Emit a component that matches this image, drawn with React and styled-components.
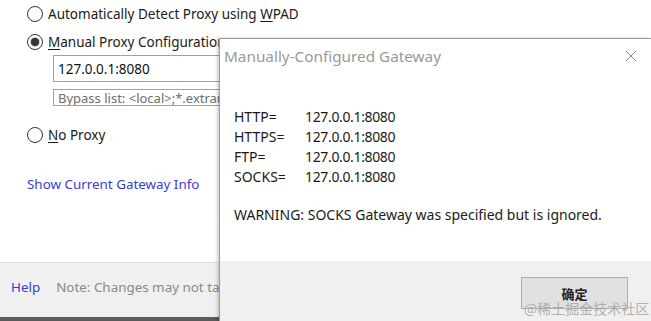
import React from 'react'
import styled, { createGlobalStyle } from 'styled-components'

const GlobalStyle = createGlobalStyle`
  html, body {
    margin: 0;
    padding: 0;
    width: 651px;
    height: 321px;
    overflow: hidden;
    background: #ffffff;
  }
  #root {
    width: 651px;
    height: 321px;
  }
`

const App = () => {
  return (
    <>
      <GlobalStyle />
      <Screen>
        <Settings>
          <Options>
            <RadioRow>
              <Radio />
              <Label>
                Automatically Detect Proxy using <u>W</u>PAD
              </Label>
            </RadioRow>
            <RadioRow>
              <Radio checked />
              <Label>
                <u>M</u>anual Proxy Configuration
              </Label>
            </RadioRow>
            <Fields>
              <TextInput>127.0.0.1:8080</TextInput>
              <TextInput placeholder>Bypass list: &lt;local&gt;;*.extranet.example.com</TextInput>
            </Fields>
            <RadioRow>
              <Radio />
              <Label>
                <u>N</u>o Proxy
              </Label>
            </RadioRow>
          </Options>
          <LinkText>Show Current Gateway Info</LinkText>
        </Settings>
        <StatusBar>
          <HelpLink>Help</HelpLink>
          <Note>Note: Changes may not take effect until you restart</Note>
        </StatusBar>

        <Dialog>
          <TitleBar>
            <Title>Manually-Configured Gateway</Title>
            <CloseIcon viewBox="0 0 12 12">
              <path d="M1 1 L11 11 M11 1 L1 11" stroke="#8a8a8a" strokeWidth="1" fill="none" />
            </CloseIcon>
          </TitleBar>
          <Body>
            <Table>
              <Key>HTTP=</Key>
              <Value>127.0.0.1:8080</Value>
              <Key>HTTPS=</Key>
              <Value>127.0.0.1:8080</Value>
              <Key>FTP=</Key>
              <Value>127.0.0.1:8080</Value>
              <Key>SOCKS=</Key>
              <Value>127.0.0.1:8080</Value>
            </Table>
            <Warning>WARNING: SOCKS Gateway was specified but is ignored.</Warning>
          </Body>
          <Footer>
            <OkButton>确定</OkButton>
          </Footer>
        </Dialog>
        <Watermark>@稀土掘金技术社区</Watermark>
      </Screen>
    </>
  )
}

const Screen = styled.div`
  position: relative;
  width: 651px;
  height: 321px;
  display: flex;
  flex-direction: column;
  background: #ffffff;
  font-family: 'Noto Sans', 'Open Sans', sans-serif;
  overflow: hidden;
`

const Settings = styled.section`
  flex: 1;
  display: flex;
  flex-direction: column;
  padding: 6px 0 0 27px;
`

const Options = styled.div`
  display: flex;
  flex-direction: column;
`

const RadioRow = styled.div`
  display: flex;
  align-items: center;
  gap: 5px;
  height: 16px;
  margin-bottom: 12px;
`

const Radio = styled.span`
  box-sizing: border-box;
  width: 16px;
  height: 16px;
  border-radius: 50%;
  border: 1px solid #333333;
  background: #ffffff;
  display: flex;
  align-items: center;
  justify-content: center;
  &::after {
    content: '';
    display: ${(p) => (p.checked ? 'block' : 'none')};
    width: 8px;
    height: 8px;
    border-radius: 50%;
    background: #333333;
    box-shadow: 0 0 0 1px #c8c8c8;
  }
`

const Label = styled.span`
  font-size: 13.5px;
  color: #1a1a1a;
  white-space: nowrap;
  u {
    text-decoration-thickness: 1px;
    text-underline-offset: 2px;
  }
`

const Fields = styled.div`
  display: flex;
  flex-direction: column;
  gap: 7px;
  margin: -7px 0 21px 26px;
`

const TextInput = styled.div`
  box-sizing: border-box;
  width: 260px;
  height: ${(p) => (p.placeholder ? '17px' : '27px')};
  border: 1px solid #a0a0a0;
  padding: 0 4px;
  display: flex;
  align-items: center;
  font-size: ${(p) => (p.placeholder ? '13px' : '13.5px')};
  color: ${(p) => (p.placeholder ? '#6d6d6d' : '#111111')};
  white-space: nowrap;
  overflow: hidden;
`

const LinkText = styled.span`
  margin-top: 20px;
  font-size: 13.4px;
  color: #3b3bd6;
`

const StatusBar = styled.footer`
  box-sizing: border-box;
  height: 59px;
  background: #f0f0f0;
  border-top: 1px solid #dedede;
  border-bottom: 4px solid #5a5a5a;
  display: flex;
  align-items: center;
  gap: 16px;
  padding: 0 0 6px 11px;
`

const HelpLink = styled.span`
  font-size: 13.4px;
  color: #3b3bd6;
`

const Note = styled.span`
  font-size: 13.4px;
  color: #8a8a8a;
  white-space: nowrap;
`

const Dialog = styled.div`
  position: absolute;
  left: 219px;
  top: 38px;
  width: 432px;
  height: 292px;
  box-sizing: border-box;
  display: flex;
  flex-direction: column;
  background: #ffffff;
  border: 1px solid #9a9a9a;
  border-right: none;
  box-shadow: -2px 0 3px rgba(0, 0, 0, 0.18);
  font-family: 'Noto Sans', 'Open Sans', sans-serif;
`

const TitleBar = styled.div`
  height: 34px;
  display: flex;
  align-items: center;
  justify-content: space-between;
  padding: 0 14px 0 4px;
`

const Title = styled.span`
  font-size: 15.3px;
  color: #999999;
`

const CloseIcon = styled.svg`
  width: 12px;
  height: 12px;
`

const Body = styled.div`
  flex: 1;
  display: flex;
  flex-direction: column;
  padding: 33px 0 0 14px;
`

const Table = styled.div`
  display: grid;
  grid-template-columns: 71px auto;
  grid-auto-rows: 20px;
  align-items: center;
  font-size: 14px;
  color: #1a1a1a;
`

const Key = styled.span``

const Value = styled.span`
  letter-spacing: -0.35px;
`

const Warning = styled.p`
  margin: 19px 0 0;
  font-size: 14px;
  color: #1a1a1a;
`

const Footer = styled.div`
  box-sizing: border-box;
  height: 68px;
  flex-shrink: 0;
  background: #f0f0f0;
  display: flex;
  align-items: flex-start;
  padding: 16px 0 0 301px;
`

const OkButton = styled.button`
  box-sizing: border-box;
  width: 107px;
  height: 32px;
  background: #e1e1e1;
  border: 1px solid #adadad;
  font-family: 'Noto Sans CJK SC', sans-serif;
  font-size: 13px;
  font-weight: 600;
  color: #222222;
  padding: 0;
`

const Watermark = styled.span`
  position: absolute;
  left: 524px;
  top: 298px;
  font-family: 'Noto Sans CJK SC', sans-serif;
  font-size: 14px;
  color: rgba(160, 160, 160, 0.8);
  white-space: nowrap;
`

export default App
